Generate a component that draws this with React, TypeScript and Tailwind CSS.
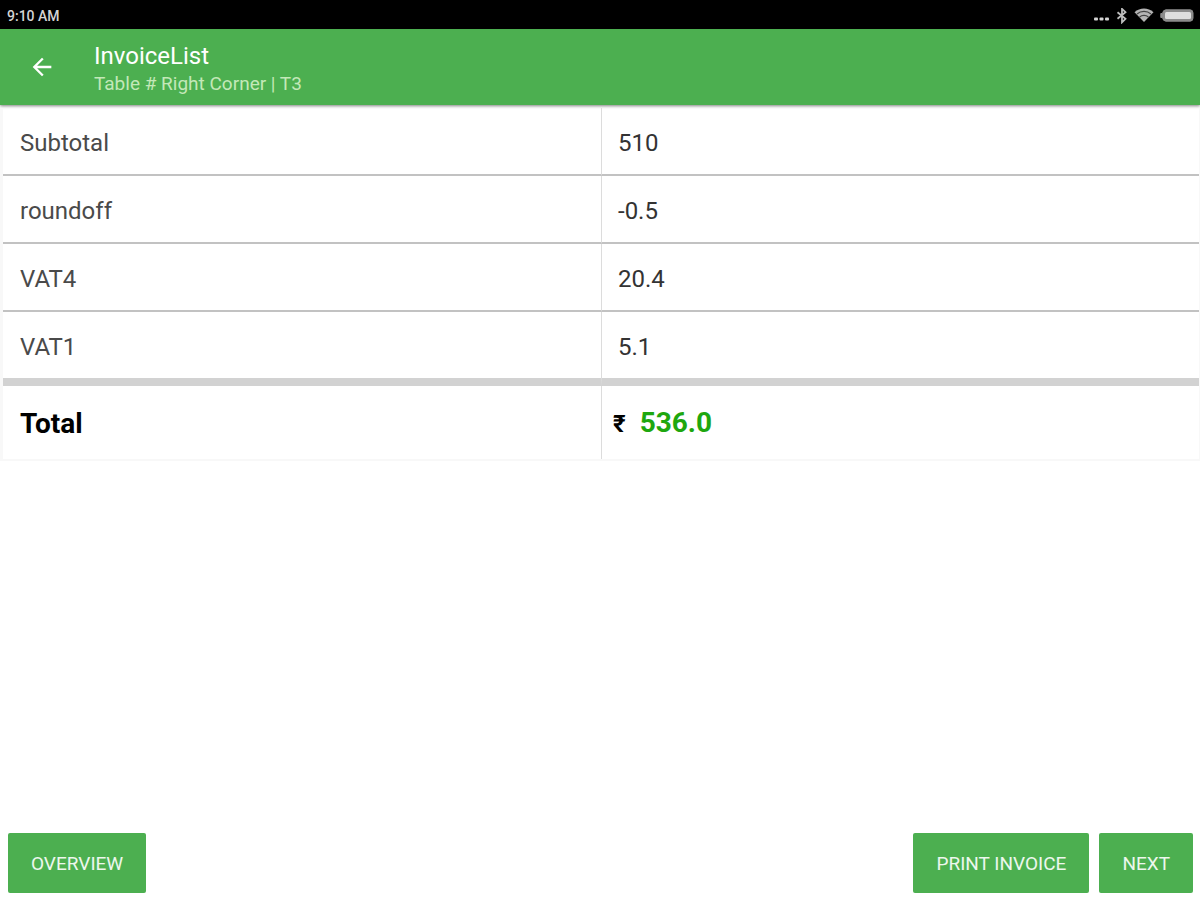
import React from 'react';

type Charge = { label: string; amount: string };

const charges: Charge[] = [
  { label: 'Subtotal', amount: '510' },
  { label: 'roundoff', amount: '-0.5' },
  { label: 'VAT4', amount: '20.4' },
  { label: 'VAT1', amount: '5.1' },
];

function StatusBar() {
  return (
    <div className="flex h-[29px] items-center justify-between bg-black pr-1.5 pl-[7px] pt-[3px] text-[#d4d4d4]">
      <span className="text-sm leading-4 font-medium">9:10 AM</span>
      <div className="flex items-center">
        <svg width="16" height="16" viewBox="0 0 16 16" fill="currentColor" aria-hidden="true">
          <rect x="0" y="9.5" width="4" height="3" rx="1" />
          <rect x="5.5" y="9.5" width="4" height="3" rx="1" />
          <rect x="11" y="9.5" width="4" height="3" rx="1" />
        </svg>
        <svg className="ml-1.5" width="12" height="16" viewBox="0 0 12 16" fill="none" stroke="#bdbdbd" strokeWidth="1.8" aria-hidden="true">
          <path d="M1.5 4.2 L9.5 10.8 L6 14.3 V0.9 L9.5 4.2 L1.5 10.8" />
        </svg>
        <svg className="ml-1.5" width="20" height="16" viewBox="0 0 20 16" aria-hidden="true">
          <path d="M0.5 4.2 C6 -0.6 14 -0.6 19.5 4.2 L10 14 Z" fill="#b4b4b4" />
          <path d="M3 6 C7 2.6 13 2.6 17 6" fill="none" stroke="#444" strokeWidth="1.2" />
          <path d="M5.6 9 C8 6.8 12 6.8 14.4 9" fill="none" stroke="#444" strokeWidth="1.2" />
        </svg>
        <svg className="ml-1.5" width="34" height="16" viewBox="0 0 34 16" aria-hidden="true">
          <path d="M0.8 5.5 H2.5 Q3 1.8 6 1.8 H30 Q33 1.8 33 5 V10 Q33 13.2 30 13.2 H6 Q3 13.2 2.5 9.5 H0.8 Z" fill="#8c8c8c" stroke="#8c8c8c" />
          <rect x="5" y="4" width="26" height="7" rx="1.5" fill="#dedede" />
        </svg>
      </div>
    </div>
  );
}

function ActionButton({ children }: { children: React.ReactNode }) {
  return (
    <button
      type="button"
      className="h-[60px] rounded-[2px] bg-[#4caf50] px-[23px] pt-0.5 text-[19px] leading-6 text-white/90"
    >
      {children}
    </button>
  );
}

export default function App() {
  return (
    <div className="flex min-h-screen flex-col bg-white font-[Roboto,sans-serif]">
      <StatusBar />
      <header className="flex h-[76px] items-center bg-[#4caf50] pl-7 shadow-[0_1px_3px_rgba(0,0,0,0.5)]">
        <button type="button" aria-label="Back" className="flex size-7 items-center justify-center text-white">
          <svg width="28" height="28" viewBox="0 0 24 24" fill="currentColor" aria-hidden="true">
            <path d="M20 11H7.83l5.59-5.59L12 4l-8 8 8 8 1.41-1.41L7.83 13H20v-2z" />
          </svg>
        </button>
        <div className="ml-[38px] pt-1.5">
          <h1 className="text-2xl leading-7 text-white">InvoiceList</h1>
          <p className="text-[19px] leading-7 text-[#c3e8b8]">Table # Right Corner | T3</p>
        </div>
      </header>

      <main className="grow pt-[3px]">
        <div className="border-r border-b-2 border-l-3 border-[#f8f8f8]">
          <table className="w-full table-fixed border-separate border-spacing-0 text-left text-2xl leading-7">
            <tbody>
              {charges.map((charge, index) => {
                const rule =
                  index < charges.length - 1
                    ? 'h-[68px] border-b-2 border-b-[#c2c2c2]'
                    : 'h-[74px] border-b-8 border-b-[#d2d2d2]';
                return (
                  <tr key={charge.label}>
                    <th scope="row" className={`${rule} w-1/2 px-[17px] pt-1 pb-0 font-normal text-[#4a4a4a]`}>
                      {charge.label}
                    </th>
                    <td className={`${rule} border-l border-l-[#dcdcdc] px-4 pt-1 pb-0 text-[#333]`}>
                      {charge.amount}
                    </td>
                  </tr>
                );
              })}
            </tbody>
            <tfoot>
              <tr>
                <th scope="row" className="h-[73px] px-[17px] pt-0.5 pb-0 text-[28px] font-bold text-black">
                  Total
                </th>
                <td className="h-[73px] border-l border-l-[#dcdcdc] px-[11px] pt-0.5 pb-0 text-[28px] font-bold text-black">
                  <span className="text-2xl">₹</span>
                  <span className="ml-3.5 text-[#1ea70f]">536.0</span>
                </td>
              </tr>
            </tfoot>
          </table>
        </div>
      </main>

      <footer className="flex items-center justify-between py-[7px] pr-[7px] pl-2">
        <ActionButton>OVERVIEW</ActionButton>
        <div className="flex gap-2.5">
          <ActionButton>PRINT INVOICE</ActionButton>
          <ActionButton>NEXT</ActionButton>
        </div>
      </footer>
    </div>
  );
}
